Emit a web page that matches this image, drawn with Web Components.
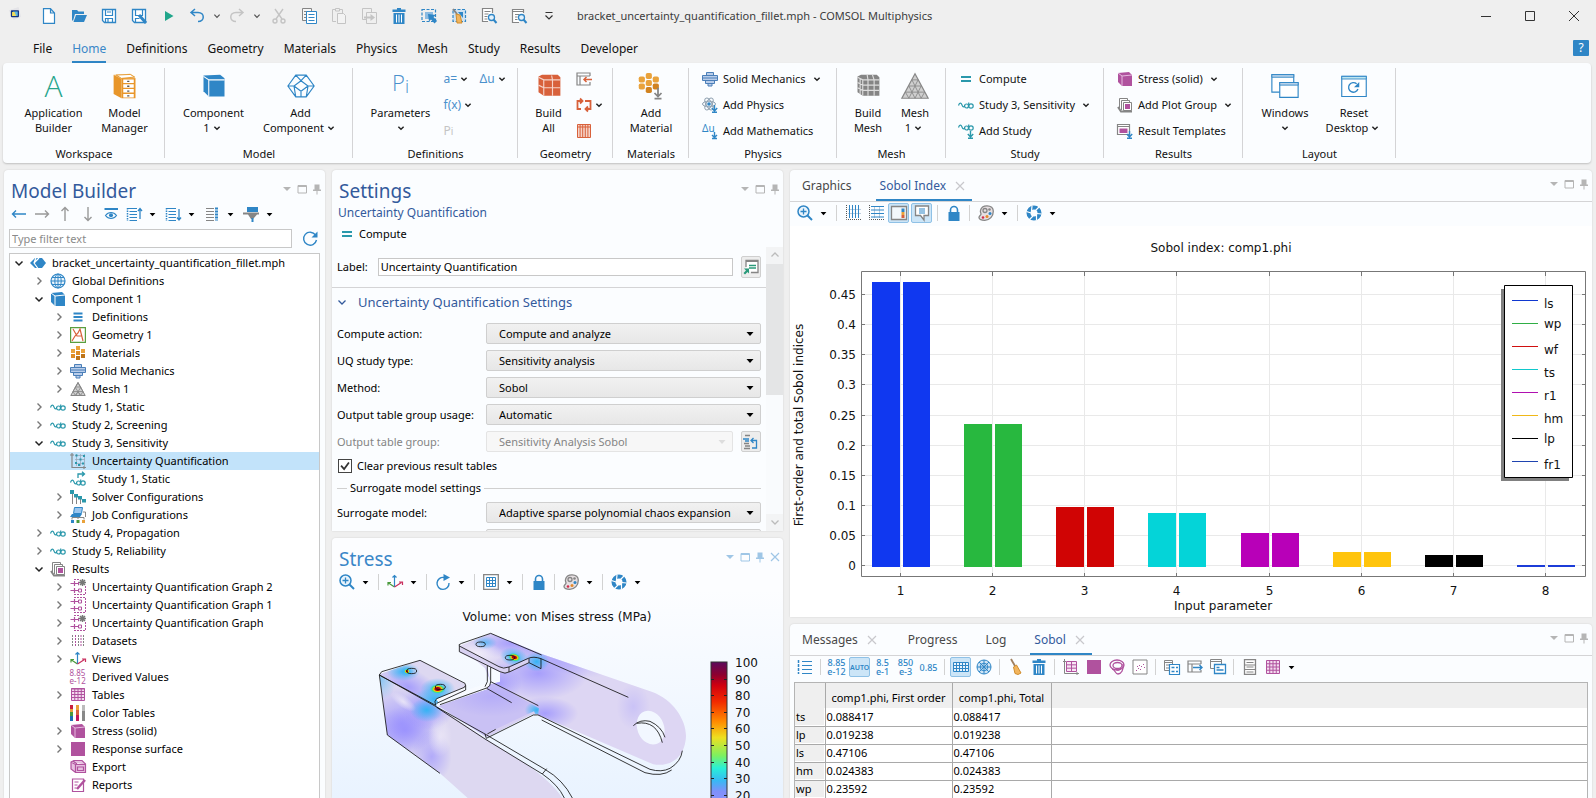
<!DOCTYPE html>
<html lang="en">
<head>
<meta charset="utf-8">
<title>bracket_uncertainty_quantification_fillet.mph - COMSOL Multiphysics</title>
<style>
html, body { margin: 0; height: 100%; }
body { background: #efefef; font: 11px/18px "Noto Sans", "Open Sans", sans-serif; color: #111; overflow: hidden; }
</style>
</head>
<body>
<comsol-app></comsol-app>
<script>
const B = '#2f86c6', T = '#2a98ab', G = '#858585', P = '#b0529e', O = '#d8613b', Y = '#e9a23b', K = '#c4c4c4';
const st = (c, w = 1) => `fill="none" stroke="${c}" stroke-width="${w}"`;
const cube = (c, l) => `<path fill="${c}" d="M1 2l11-1 3 3v11H5L1 11z"/><path ${st(l)} d="M1 2l4 3v10M5 5l10-1"/>`;
const wave = `<path ${st(T, 1.2)} d="M.5 8.500C1.500 5.500 3 5.500 4 8s2 2.500 3 .5"/><circle ${st(T, 1.2)} cx="8.500" cy="9" r="2"/><circle ${st(T, 1.2)} cx="13" cy="9" r="2.200"/><path ${st(T, 1.2)} d="M10.700 9V5.500"/>`;
const down = c => `<path ${st(c, 1.400)} d="M12.500 8v6M9.800 11l2.700 3 2.700-3M10 15.300h5"/>`;
const stack = `<path fill="#fff" stroke="${G}" d="M2.500 11V1.500h8V3M4.500 13V3.500h8V5"/><path fill="#fff" stroke="${G}" d="M6.500 5.500h8v8h-8z"/><path fill="${P}" d="M8 7h5v5H8z"/><path ${st(G, 2)} d="M1 10l3 4.500h11"/>`;
const solid = `<path fill="#b9cdea" stroke="#4b7fb8" d="M4.500 1.500h7v3h-7zM.5 4.500h15v5H.5zM3.500 9.500h9v3h-9zM6 12.500h4v2.500H6z"/><path stroke="#4b7fb8" d="M0 7h16"/>`;
const mats = `<g fill="${Y}"><path d="M6 1h4v4H6zM1 4h4v4H1zM11 4h4v4h-4z"/></g><g fill="#df8c24"><path d="M6 6h4v4H6zM1 9h4v4H1z"/></g><path fill="#bd7419" d="M6 11h4v4H6zM11 9h4v4h-4z"/>`;
const tri = `<path fill="#cfcfcf" stroke="${G}" d="M8 1.500L15.200 14.500H.8z"/><path ${st(G, .8)} d="M5.500 6h5M3 10.500h10M8 1.500l-5 9 2.500 4 5.500-8.500M8 1.500l5 9-2.500 4L5 6M8 10.500l-2.500 4M8 10.500l2.500 4"/>`;
const uq = s => `<path ${st(P)} stroke-dasharray="2 1" d="M4 .5h11.500v15H4"/><path ${st(P, 1.2)} d="M.5 4.500H8M4.500 2v5M.5 11.500H8M4.500 9v5"/><path fill="#fff" stroke="${P}" d="M8.500 3h3v3h-3zM8.500 10h3v3h-3z"/>` + (s ? `<path fill="#fff" d="M9 0h7v7H9z"/><path stroke="#777" stroke-width="1.500" d="M12.500 0v7M9 3.500h7M10 1l5 5M15 1l-5 5"/>` : '');
const trash = `<path fill="${B}" d="M6 0h4v1.500h4.500V4h-13V1.500H6zM2.500 5h11v11h-11z"/><path stroke="#fff" d="M5.500 6.500v8M8 6.500v8M10.500 6.500v8"/>`;
const palette = `<path fill="#e6dfe2" stroke="${G}" stroke-width="1.300" d="M9 .8c4 0 6.300 2 6.300 5.500 0 5-3.500 9-8.500 9C3.500 15.300 1 14.500 1 12.500s2-2 2-3.500-1-1.500-.5-3.500C3 3 5.500.8 9 .8z"/><circle cx="7" cy="5.500" r="2" ${st(G, 1.3)}/><circle cx="11.500" cy="4.500" r="1.300" fill="${G}"/><circle cx="12" cy="8.500" r="1.500" fill="${B}"/><circle cx="9" cy="11.500" r="1.500" fill="#e58a2c"/><circle cx="5" cy="12.500" r="1.300" fill="#d42a4a"/>`;
const camera = `<circle cx="8" cy="8" r="5.500" ${st(B, 4)}/><path stroke="#fff" stroke-width="1.200" d="M6 1l-.5 5M13 2L9.500 5.500M15.500 9L10.500 8.500M10.500 15l0-5M3.500 14.500L7 11M.5 6.500L5 8"/>`;
const magn = `<circle cx="10.500" cy="9.500" r="3" fill="#e3f1fb" stroke="${B}" stroke-width="1.300"/><path stroke="${B}" stroke-width="2" d="M12.500 11.500l3 3.500"/>`;
const gridBox = (c, f, x0, y0, x1, y1, n, m) => { let d = ''; for (let i = 0; i <= n; i++) d += `M${x0 + (x1 - x0) * i / n} ${y0}V${y1}`; for (let i = 0; i <= m; i++) d += `M${x0} ${y0 + (y1 - y0) * i / m}H${x1}`; return `<path fill="${f}" d="M${x0} ${y0}H${x1}V${y1}H${x0}z"/><path ${st(c)} d="${d}"/>`; };
const win = (x, y, w, h, c) => `<path fill="#fbfdff" stroke="${c}" d="M${x} ${y}h${w}v${h}h${-w}z"/><path stroke="${c}" d="M${x} ${y + 2}h${w}"/>`;
const ICONS = {
  logo: `<path fill="#e4e4e8" d="M1 4L13 0l3 12-9 4z"/><rect x="3.500" y="4" width="10" height="8.500" rx="1" fill="#12327f"/><rect x="6" y="5.500" width="6" height="5.500" fill="#5fb8e0"/><path fill="#f2dc5a" d="M5 6h3l2 5H5z"/>`,
  new: `<path fill="#fff" stroke="${B}" stroke-width="1.200" d="M2.500.6h7L13.500 5v10.400h-11zM9.500.6V5h4"/>`,
  open: `<path fill="${B}" d="M1 2h5l1.500 1.500H13V6H4L2 13l-1-1z"/><path fill="${B}" d="M5 7h11l-3 7H2.500z"/>`,
  save: `<path fill="#fff" stroke="${B}" stroke-width="1.300" d="M1.500 1.500h13v13h-11l-2-2z"/><path ${st(B, 1.2)} d="M4.500 1.500v6h7v-6M4.500 14.500v-4h7v4M6 4h4M7 11v3"/>`,
  saveas: `<path fill="#fff" stroke="${B}" stroke-width="1.300" d="M1.500 1.500h13v13h-11l-2-2z"/><path ${st(B, 1.2)} d="M4.500 1.500v6h7v-6M4.500 14.500v-4h4"/><path stroke="${B}" stroke-width="3" d="M8 7l7 8"/>`,
  run: `<path fill="#21a68b" d="M4 3l8.500 5L4 13z"/>`,
  undo: `<path ${st(B, 1.500)} d="M6 1L2 4.500 6 8M2.500 4.500H9c7 0 7 9 0 9"/>`,
  redo: `<path ${st(K, 1.500)} d="M10 1l4 3.500L10 8M13.500 4.500H7c-7 0-7 9 0 9"/>`,
  cut: `<path ${st(K, 1.400)} d="M4 1l7 10M12 1L5 11"/><circle ${st(K, 1.400)} cx="4" cy="13" r="2"/><circle ${st(K, 1.400)} cx="12" cy="13" r="2"/>`,
  copy: `<path fill="#f6f6f6" stroke="${G}" d="M1.500.5h9v12h-9zM3 3.500h3M3 6.500h2M3 9.500h2"/><path fill="#fff" stroke="${B}" d="M5.500 3.500h10v12h-10zM7.500 6.500h6M7.500 9.500h6M7.500 12.500h6"/>`,
  paste: `<path ${st(K)} d="M5 13.500H1.500v-12H4M9 1.500h2.500V5M4.500.5h4v2.500h-4z"/><path fill="#f3f3f3" stroke="${K}" d="M6.500 5.500h6l2 2v8h-8z"/>`,
  dup: `<path ${st(K)} d="M5 11.500H1.500v-11h9V4M5.500 4.500h10v11h-10z"/><path ${st(K, 2)} d="M3 9.500h7"/><path fill="${K}" d="M9.500 6l4.500 3.500-4.500 3.500z"/>`,
  trash,
  select: `<path ${st(B, 1.2)} stroke-dasharray="3 1.500" d="M1 1.500h13.500v12H1z"/><path fill="#8bbbe2" d="M4 4h8v7H4z"/><path fill="${B}" d="M7 6l8 1-2.500 2 3.500 4-2.500 2.500-3.500-4-2 2z"/>`,
  clear: `<path fill="#cfe2f2" stroke="${B}" stroke-width="1.200" stroke-dasharray="3 1.500" d="M2 1.500h12.500v12H2z"/><path fill="${B}" d="M7 4h5v6z"/><path stroke="${G}" stroke-width="2" d="M2 1l4 5"/><path fill="#f2b55e" stroke="#d08c2c" d="M5 6l4 1 2 8H6z"/>`,
  find: `<path fill="#fff" stroke="${G}" stroke-width="1.200" d="M11.500 5V.5h-10v13H7"/><path ${st(G)} d="M3.500 3.500h6M3.500 6h4M3.500 8.500h3M3.500 11h3"/>${magn}`,
  find2: `<path fill="#fff" stroke="${G}" stroke-width="1.200" d="M12.500 5V1.500h-11v13H8M1.500 3.500h11"/><path ${st(G)} d="M4 6.500h4M4 9h2.500M4 11.500h2.500"/>${magn}`,
  custom: `<path ${st('#333', 1.200)} d="M4.500 4.500h7M4.500 7.500L8 11l3.500-3.500"/>`,
  chev: `<path ${st('#222', 1.600)} d="M5 6.500l3 3 3-3"/>`,
  chevg: `<path ${st('#555', 1.400)} d="M5 6.500l3 3 3-3"/>`,
  topen: `<path ${st('#222', 1.500)} d="M4.500 6.500L8 10l3.500-3.500"/>`,
  tclosed: `<path ${st('#777', 1.400)} d="M6.500 4.500L10 8l-3.500 3.500"/>`,
  sect: `<path ${st('#335a9c', 1.300)} d="M4.500 6.500L8 10l3.500-3.500"/>`,
  sup: `<path ${st('#bbb', 1.300)} d="M4.500 9.500L8 6l3.500 3.500"/>`,
  sdown: `<path ${st('#bbb', 1.300)} d="M4.500 6.500L8 10l3.500-3.500"/>`,
  drop: `<path fill="#000" d="M4.500 6h7L8 10z"/>`,
  dropg: `<path fill="#ddd" d="M4.500 6h7L8 10z"/>`,
  hdrop: `<path fill="currentColor" d="M4 6h8l-4 4z"/>`,
  hmax: `<path fill="none" stroke="currentColor" d="M4 4.500h8.500v7.500H4z"/><path stroke="currentColor" d="M4 5.500h8"/>`,
  hpin: `<path fill="currentColor" d="M5.500 3.500h5v5H12v1.500H8.500v3.500h-1V10H4V8.500h1.500z"/>`,
  hx: `<path fill="none" stroke="currentColor" stroke-width="1.200" d="M4 4l8 8M12 4l-8 8"/>`,
  wmin: `<path stroke="#333" d="M3 8.500h10"/>`, wmax: `<path ${st('#333')} d="M3.500 3.500h9v9h-9z"/>`, wx: `<path ${st('#333')} d="M3 3l10 10M13 3L3 13"/>`,
  check: `<path ${st('#333', 2)} d="M3.500 7.500l3.500 4L12.500 4"/>`,
  compute: `<path stroke="${T}" stroke-width="2" d="M3 6h10M3 10h10"/>`,
  study: wave, solid, mats, tri, stack, palette, camera, cubeB: cube(B, '#fff'), cubeP: cube(P, '#e6b9df'),
  physics: `<g ${st('#8fa0b0')}><ellipse cx="7" cy="7" rx="6.500" ry="2.800"/><ellipse cx="7" cy="7" rx="6.500" ry="2.800" transform="rotate(60 7 7)"/><ellipse cx="7" cy="7" rx="6.500" ry="2.800" transform="rotate(120 7 7)"/></g><circle cx="7" cy="7" r="1.800" fill="${B}"/>${down(B)}`,
  math: `<text x="0" y="9" font-size="10" fill="${B}" font-family="Noto Sans, sans-serif">Δu</text><path ${st(B, 1.4)} d="M12.500 9v5M10 12l2.500 2.500L15 12M10 15.500h5"/>`,
  addstudy: `<g transform="translate(0 -4)">${wave}</g>${down(T)}`,
  template: `<path fill="#fff" stroke="${G}" stroke-width="1.200" d="M.5 1.500h12v10H.5zM.5 3.500h12"/><path fill="${P}" d="M2.500 5.500h8v4.500h-8z"/>${down(B)}`,
  gimport: `<path ${st(G, 1.200)} d="M14 5V2H1v12h13v-3M1 5h13M4 5v9"/><path ${st(O, 1.500)} d="M16 8.500H8M10.500 6L8 8.500l2.500 2.500"/>`,
  gloop: `<path ${st(O, 1.800)} d="M6 4H1.500v8H5M10 12h4.500V4H9M4 1.500L6.500 4 4 6.500M12 9.500L9.500 12l2.500 2.500"/>`,
  gclean: gridBox(O, '#f6d3c8', 1.5, 1.500, 14.500, 14.500, 5, 1) + `<path ${st(O)} d="M1.500 4h13"/>`,
  root: `<path fill="${B}" d="M0 8l5-5h7l4 5-4 5H5z"/><path ${st('#fff', 1.200)} d="M6 2.500L4 8l4 5.500M4 8L9 3"/>`,
  globe: `<circle cx="8" cy="8" r="7" fill="#eaf4fc" stroke="${B}" stroke-width="1.200"/><ellipse cx="8" cy="8" rx="3.200" ry="7" ${st(B)}/><path ${st(B)} d="M8 1v14M1 8h14M2 4.500h12M2 11.500h12"/>`,
  defs: `<path stroke="${B}" stroke-width="2" d="M3.500 4.500h9M3.500 8h9M3.500 11.500h9"/>`,
  geom: `<path fill="#fff" stroke="#5a9e3f" stroke-width="1.200" d="M.6.600h14.800v14.800H.6z"/><path ${st(O, 1.200)} d="M3 2l4 7h5M2 14l3-5 3-3 2-4 3 12"/>`,
  uqn: `<path ${st(G, 1.200)} d="M2 0v14.500h14M0 2h4M14 13v3"/><path ${st('#9ab', .8)} d="M5 2.500h10M5 6.500h10M5 10.500h10M6.500 1v12M10.500 1v12M14.500 1v12"/><path fill="${T}" d="M5.500 1.500h2v2h-2zM13 2h2v2h-2zM9.500 5.500h2v2h-2zM5 9h2v2H5zM12 9.500h2v2h-2zM8 11h2v2H8z"/>`,
  ref: `<g transform="translate(0 3)">${wave}</g><path ${st(T, 1.300)} d="M8 7V3h6M12 .8L14.500 3 12 5.200"/>`,
  solver: `<g stroke="${G}"><path d="M2.500 2v13M6.500 6v9M10.500 8v7"/></g><g fill="${T}"><path d="M0 1h4v4H0zM4 5h4v3.500H4zM8 7h4v3.500H8zM12 10h4v3.500h-4z"/></g>`,
  job: `<path fill="#9cc6ee" stroke="${B}" d="M4.500.5h8l-1 6h-8z"/><path fill="${B}" d="M2 7h10l-2 3H0z"/><path ${st(G)} d="M13 5h2.500v5M2 12.500v-2h12v2M8 10v2"/><path fill="${B}" d="M1 13h3v3H1z"/><path fill="#4a9a3c" d="M6.500 13h3v3h-3z"/><path fill="${Y}" d="M12 13h3v3h-3z"/>`,
  uqg: uq(1), uqg1: uq(0),
  datasets: `<path stroke="${G}" stroke-dasharray="2 1" d="M2.500 2v12M8.500 2v12M13.500 2v12"/><path stroke="${P}" stroke-dasharray="2 1" d="M5.500 2v12M11 2v12"/>`,
  views: `<path ${st('#4a9a3c', 1.200)} d="M7.500 13L1.500 9M1 11.500V8.500h3"/><path ${st(B, 1.200)} d="M7.500 13V1.500M5.500 3.500l2-2 2 2"/><path ${st('#c9305f', 1.200)} d="M7.500 13l7-4.500M12 8h3.500v3"/>`,
  tables: gridBox(P, '#f3dcef', 1.500, 1.500, 14.500, 13.500, 4, 4) + `<path stroke="${P}" d="M1 2h14"/>`,
  colors: `<path fill="#c9203f" d="M0 0h3v4H0z"/><path fill="${Y}" d="M0 4h3v3H0z"/><path fill="#4a9a3c" d="M0 7h3v4H0z"/><path fill="#1d6fb5" d="M0 11h3v5H0z"/><path fill="${Y}" d="M6 0h3v5H6z"/><path fill="${O}" d="M6 5h3v5H6z"/><path fill="#c2185b" d="M6 10h3v6H6z"/><path fill="#bbb" d="M12 0h3v6h-3z"/><path fill="#888" d="M12 6h3v10h-3z"/>`,
  square: `<path fill="${P}" d="M1 1h14v14H1z"/>`,
  export: `<path fill="#e7bfe0" stroke="${P}" stroke-width="1.200" d="M1 3l3-1.500h8L15.500 5v8.500h-10L1 10zM1 3l4.500 2.500H15M5.500 5.500v8"/><path ${st(P, 1.200)} d="M7.500 8h6v3.500h-6zM3 2l4 3"/>`,
  reports: `<path fill="#fff" stroke="${P}" stroke-width="1.200" d="M2.500 2h11v12.500h-11z"/><path ${st(P)} d="M4.500 5h4M4.500 8h3M4.500 11h2"/><path stroke="${P}" stroke-width="2.500" d="M7 12l8-9"/>`,
  left: `<path ${st(B, 1.400)} d="M15 8H1.500M5 4.500L1.500 8 5 11.500"/>`, right: `<path ${st('#999', 1.400)} d="M1 8h13.500M11 4.500L14.500 8 11 11.500"/>`,
  up: `<path ${st('#999', 1.400)} d="M8 15V1.500M4.500 5L8 1.500 11.500 5"/>`, dn: `<path ${st('#999', 1.400)} d="M8 1v13.500M4.500 11L8 14.500l3.500-3.500"/>`,
  show: `<path stroke="${B}" stroke-width="2" d="M1.500 3H15"/><path ${st(B, 1.200)} d="M2.500 9.500c3-4 8-4 11 0-3 4-8 4-11 0z"/><circle cx="8" cy="9.300" r="2" fill="${B}"/>`,
  coll: `<path stroke="${B}" stroke-width="1.500" stroke-dasharray="1.500 1" d="M1.500 2v13"/><path stroke="${B}" d="M1 2.500h10M3.500 5.500H11M3.500 8.500H11M3.500 11.500H11M3.500 14.500H11"/><path ${st(B, 1.300)} d="M14 13V2.500M12 5l2-2.500L16 5"/>`,
  expa: `<path stroke="${B}" stroke-width="1.500" stroke-dasharray="1.500 1" d="M1.500 2v13"/><path stroke="${B}" d="M1 2.500h10M3.500 5.500H11M3.500 8.500H11M3.500 11.500H11M3.500 14.500H11"/><path ${st(B, 1.300)} d="M14 3v11M12 11.500l2 2.500 2-2.500"/>`,
  cols: `<path stroke="${G}" stroke-width="1.200" d="M2 2.500h8M2 5.500h8M2 8.500h8M2 11.500h8M2 14.500h8"/><path stroke="${B}" stroke-width="3" stroke-dasharray="2 1" d="M12.500 1.500v13"/>`,
  filter: `<path fill="${B}" d="M4 1h11v5H4z"/><path fill="${G}" d="M0 6.500h16v2h-2L10 13H8L5 8.500H0z"/><path fill="${B}" d="M8.500 12h2v4h-2z"/>`,
  refresh: `<path ${st(B, 1.400)} d="M13.500 4A6.500 6.500 0 1 0 14.500 9"/><path fill="${B}" d="M15.500.5v6h-6z"/>`,
  rotate: `<path ${st(B, 1.400)} d="M9 3.500A6 6 0 1 0 14 9"/><path fill="${B}" d="M8.500 0L15 3.500 8.500 7z"/>`,
  labelb: `<path fill="#fff" stroke="${G}" stroke-width="1.300" d="M3 8V1.500h12v12H8"/><path stroke="${G}" stroke-width="2" d="M3 2h12"/><path stroke="#2a9a7a" stroke-width="1.300" d="M6 6.500h7M6 9h7"/><path fill="#2a9a7a" d="M1 9.500h5v5L4.500 13 2 15.500.5 14 3 11.500z"/>`,
  goto: `<path stroke="${G}" stroke-width="1.300" d="M3 1.500h5M2 9.500h5M3 12h5M2 14.500h6"/><path stroke="${B}" stroke-width="1.500" d="M1 5h6M3 7h4"/><path ${st(B, 1.300)} d="M9 6.500h5.500v7.500H10M11.500 4L9 6.500 11.500 9"/>`,
  zoom: `<circle cx="6.500" cy="6.500" r="5.500" fill="#eaf4fc" stroke="${B}" stroke-width="1.500"/><path stroke="${B}" stroke-width="1.300" d="M3.500 6.500h6M6.500 3.500v6"/><path stroke="${B}" stroke-width="2" d="M10.500 10.500l4.500 4.500"/>`,
  gridb: `<path fill="#fff" stroke="${G}" stroke-width="1.300" d="M.7.700h14.600v14.600H.7z"/>${gridBox(B, '#fff', 3.5, 3.5, 12.5, 12.5, 3, 3)}`,
  lock: `<path fill="${B}" d="M2.500 7h11v9h-11z"/><path ${st(B, 1.600)} d="M4.500 8V5a3.500 3.500 0 0 1 7 0v3"/>`,
  gv: `<path ${st('#555')} stroke-dasharray="1 1" d="M1.500 0v14.500H16"/><path stroke="#bcd" d="M3 4.500h13M3 8.500h13"/><path stroke="${B}" d="M4.500 0v13M7.500 0v13M10.500 0v13M13.500 0v13"/>`,
  gh: `<path ${st('#555')} stroke-dasharray="1 1" d="M1.500 0v14.500H16"/><path stroke="#bcd" d="M6.500 1v12M11.500 1v12"/><path stroke="${B}" d="M3 1.500h13M3 5h13M3 8.500h13M3 12h13"/>`,
  legend: `<path fill="#f2f7fb" stroke="${G}" stroke-width="1.300" d="M.5 1.500h15v13H.5z"/><path fill="${B}" d="M10.500 3.500h3V7h-3z"/><path fill="${Y}" d="M10.500 7h3v3h-3z"/><path fill="${O}" d="M10.500 10h3v3h-3z"/>`,
  note: `<path fill="#fff" stroke="${G}" stroke-width="1.300" d="M1.500 1h13v9.500h-4.500V15L6.500 10.500h-5z"/><path stroke="${B}" stroke-width="1.200" d="M5 4h6M5 6h6M5 8h6"/>`,
  nlist: `<path stroke="${B}" stroke-width="1.200" d="M5 2.500h10M5 6.500h10M5 10.500h10M5 14.500h10"/><path stroke="${B}" stroke-width="1.500" stroke-dasharray="3 1" d="M1.500 1v14"/>`,
  tbl: gridBox(B, '#eaf4fc', .5, 3.500, 15.500, 12.500, 5, 3),
  polar: `<circle cx="8" cy="8" r="7" fill="#cfe4f5" stroke="${B}"/><circle cx="8" cy="8" r="3.800" ${st(B)}/><path stroke="${B}" d="M8 1v14M1 8h14M3 3l10 10M13 3L3 13"/>`,
  broom: `<path stroke="#a08060" stroke-width="1.800" d="M3 0l4 7"/><path fill="#f2b55e" stroke="#d08c2c" d="M5.500 8l3-2 4.500 8-3 1.500-3-1z"/>`,
  ptable: `<path ${st(G)} d="M1.500 0v14.500H16M0 2.500h3M14 13v3"/>${gridBox(P, '#f7e6f4', 3.500, 2.500, 13.500, 12.500, 2, 3)}`,
  contour: `<ellipse cx="8" cy="6" rx="7" ry="5" ${st(P, 1.300)}/><ellipse cx="8.500" cy="6.500" rx="4.500" ry="3" ${st(P, 1.300)}/><path ${st(P, 1.300)} d="M3 10c3 0 3 5 6 5s6-4 5-10M7 10c2 2 4 1 5-1"/>`,
  scatter: `<path fill="#fff" stroke="${G}" d="M1 1h14v14H1z"/><g fill="${P}"><path d="M4 11h1v1H4zM6 9h1v1H6zM8 10h1v1H8zM9 7h1v1H9zM11 5h1v1h-1zM7 6h1v1H7zM12 8h1v1h-1zM5 7h1v1H5z"/></g>`,
  cpt: `${win(.5, 1.500, 8, 10, G)}<path stroke="${G}" d="M2 6h3M2 9h3"/><path fill="#fff" stroke="${B}" stroke-width="1.200" d="M5.500 5.500h10v10h-10z"/><path stroke="${B}" stroke-width="1.600" d="M7.500 8.500h3M12 8.500h2M7.500 12.500h3M12 12.500h2"/>`,
  expt: `<path ${st(G, 1.200)} d="M14 5V2H1v11h13v-2M1 5h13M5 5v8"/><path ${st(B, 1.400)} d="M6 8.500h9M12.500 6L15 8.500 12.500 11"/>`,
  wins: win(.5, .5, 11, 9, G) + `<path fill="#fff" stroke="${B}" stroke-width="1.300" d="M4.500 5.500h11v9h-11z"/><path stroke="${B}" stroke-width="1.300" d="M6.500 8.500h3M6.500 11h7"/>`,
  form: `<path fill="#fff" stroke="${G}" stroke-width="1.300" d="M2.500.7h11v14.600h-11z"/><path ${st(G, 1.200)} d="M4.500 3.500h7M2.500 6h11M4.500 8h7M2.500 10.500h11M4.500 13h7"/>`,
  ptab: gridBox(P, '#f3dcef', 1.500, 1.500, 14.500, 14.500, 4, 4),
  manager: ['0 0 32 32', `<path fill="#f1c27c" d="M3 3l19-1 6 4-17 2z"/><path fill="#fff" stroke="#e39527" d="M6 3.500l16-.7 5 3-15 1.500z"/><path fill="#e8962a" d="M3 3l9 5v22l-9-5z"/><path fill="#e8962a" d="M12 7h16v23H12z"/><path fill="#fff" d="M14 8.500h12v4H14zM14 14h12v4H14zM14 19.500h12v4H14zM14 25h12v4H14z"/><path fill="#555" d="M18.500 10h2.500v1.500h-2.500zM18.500 15.500h2.500V17h-2.500zM18.500 21h2.500v1.500h-2.500zM18.500 26.500h2.500V28h-2.500z"/>`],
  bigcube: ['0 0 32 32', `<path fill="${B}" d="M4 4l19-1 5 4v21H10l-6-6z"/><path ${st('#fff', 1.200)} d="M4 5l6 4v19M10 9h18"/>`],
  wire: ['0 0 32 32', `<path ${st(B, 1.300)} d="M1 16L10 3.500h12L31 16l-9 12.500H10zM10 3.500L16 10l6-6.500M10 28.500L8 16l8-6 8 6-2 12.500M8 16H1M24 16h7M8 16l8 6 8-6M16 22v6"/>`],
  red: ['0 0 32 32', `<path fill="${O}" d="M4 5l4-2h18l3 3v21H10l-6-4z"/><path ${st('#f6d3c8', 1.300)} d="M4 6l6 3h19M10 9v18M19 4l1 5v18M4 15l6 3h19"/>`],
  gray: ['0 0 32 32', `<path fill="#858585" d="M4 5l4-2h18l3 3v21H10l-6-4z"/><path ${st('#ddd', 1.300)} d="M4 6l6 3h19M10 9v18M16 9v18M23 9v18M15 3l1 6M21 3l2 6M4 12l6 3h19M4 18l6 3h19M7 8v17"/>`],
  mesh: ['0 0 32 32', `<path fill="#cfcfcf" stroke="#888" stroke-width="1.400" d="M16 2l15 28H1z"/><path ${st('#888', 1)} d="M12.500 9h7M9 16h14M5 23h22M12.500 9L23 30M9 16l7 14M5 23l4 7M19.500 9L9 30M23 16l-7 14M27 23l-4 7"/>`],
  addmat: ['0 0 32 32', `<g fill="${Y}"><rect x="10" y="1" width="7" height="7" rx="2"/><rect x="2" y="5" width="7" height="7" rx="2"/><rect x="18" y="5" width="7" height="7" rx="2"/><rect x="10" y="9" width="7" height="7" rx="2"/><rect x="2" y="13" width="7" height="7" rx="2"/></g><g fill="#d1821f"><rect x="10" y="17" width="7" height="7" rx="2"/><rect x="18" y="13" width="7" height="7" rx="2"/></g><path ${st(G, 2)} d="M24 18v10M20 24l4 4 4-4M20 30.500h8"/>`],
  windows: ['0 0 32 32', `<path fill="#fff" stroke="${B}" stroke-width="1.300" d="M1 3h25v20H1z"/><path fill="#b9d3ea" stroke="${B}" d="M1 3h25v3H1z"/><path fill="#fff" stroke="${B}" stroke-width="1.300" d="M10 12h21v17H10z"/><path fill="#b9d3ea" stroke="${B}" d="M10 12h21v3H10z"/>`],
  reset: ['0 0 32 32', `<path fill="#fff" stroke="${B}" stroke-width="1.300" d="M2 5h28v23H2z"/><path fill="#bfe6f0" stroke="${B}" d="M2 5h28v3H2z"/><path ${st(B, 1.600)} d="M19 13.500a5.500 5.500 0 1 0 1.500 6"/><path fill="${B}" d="M22 11.500v6h-6z"/>`]
};

const sheet = `*{box-sizing:border-box} button{font:inherit;color:inherit;background:none;border:0;margin:0;padding:0;cursor:default} [hidden]{display:none}`;
function define(name, css, html, init) {
  const tpl = document.createElement('template');
  customElements.define(name, class extends HTMLElement {
    connectedCallback() {
      if (this.shadowRoot) return;
      const root = this.attachShadow({ mode: 'open' });
      tpl.innerHTML = `<style>${sheet}${css}</style>${typeof html === 'function' ? html(this) : html}`;
      root.append(tpl.content.cloneNode(true));
      if (init) init(this, root);
    }
  });
}
const at = (e, n, d = '') => e.getAttribute(n) ?? d;
const ic = (n, s = 16) => `<ui-icon name="${n}" size="${s}"></ui-icon>`;

define('ui-icon', `:host{display:inline-flex;flex:none} svg{display:block;overflow:visible}
 .num{width:17px;font-size:8px;line-height:8px;color:${P}} .num b{display:block;font-weight:400}`, e => {
  if (at(e, 'name') === 'derived') return '<span class="num"><b>8.85</b><b>e-12</b></span>';
  const d = ICONS[at(e, 'name')], s = at(e, 'size', '16');
  const [vb, body] = Array.isArray(d) ? d : ['0 0 16 16', d];
  return `<svg width="${s}" height="${s}" viewBox="${vb}" aria-hidden="true">${body}</svg>`;
});

/* Toolbar: items is a list of icon names; "|" separator, "v" drop arrow, "*" prefix pressed, "#a,b" text glyph */
define('tool-strip', `:host{display:flex;align-items:center;height:20px}
 button{width:23px;height:20px;display:grid;place-items:center;align-content:center;color:${B};font-size:9px;line-height:9px;font-weight:500;flex:none;border:1px solid transparent;border-radius:2px}
 button.on{background:#cce5f7;border-color:#8fc1e6;width:21px;margin:0 1px} button.v{width:16px;justify-items:start}
 i{width:9px;height:16px;flex:none;display:flex;justify-content:center} i::before{content:"";width:1px;background:#d2d2d2} b{font-weight:inherit;display:block} .auto b{font-size:7px;font-weight:600}`,
  e => at(e, 'items').split(' ').map(t => {
    if (t === '|') return '<i></i>';
    if (t === 'v') return `<button class="v" aria-label="More">${ic('drop', 13)}</button>`;
    const on = t[0] === '*' ? 'on' : ''; if (on) t = t.slice(1);
    if (t[0] === '#') return `<button class="${on} ${t === '#AUTO' ? 'auto' : ''}">${t.slice(1).split(',').map(x => `<b>${x}</b>`).join('')}</button>`;
    return `<button class="${on}" aria-label="${t}">${ic(t)}</button>`;
  }).join(''));

define('title-bar', `:host{display:flex;align-items:center;height:32px;padding-left:5px} .logo{width:29px;padding-left:3px}
 button{width:30px;height:30px;display:grid;place-items:center;flex:none} .s{width:26px} .c{width:14px} h1{font:inherit;margin:0 0 0 13px;flex:1;white-space:nowrap;color:#3c3c3c} .w{width:44px}`,
  () => { const b = (n, c = '', s = 16) => `<button class="${c}" aria-label="${n}">${ic(n, s)}</button>`;
    return `<span class="logo">${ic('logo', 13)}</span>` + ['new', 'open', 'save', 'saveas', 'run'].map(n => b(n)).join('') + b('undo', 's') + b('chevg', 'c', 14) + b('redo', 's') + b('chevg', 'c', 14) +
      ['cut', 'copy', 'paste', 'dup', 'trash', 'select', 'clear', 'find', 'find2', 'custom'].map(n => b(n)).join('') + `<h1>bracket_uncertainty_quantification_fillet.mph - COMSOL Multiphysics</h1>` + b('wmin', 'w') + b('wmax', 'w') + b('wx', 'w'); });

define('menu-tabs', `:host{display:flex;align-items:flex-start;gap:20px;height:31px;padding:0 7px 0 33px;font-size:12px;line-height:18px}
 button{height:31px;border-bottom:2px solid transparent;padding:4px 0 0} button:first-child{margin-right:7px} .on{color:#3a87c8;border-color:${B}}
 button.help{margin:8px 0 0 auto;width:16px;height:16px;background:${B};color:#fff;line-height:16px;border:0;border-radius:1px;padding:0}`,
  ['File', 'Home', 'Definitions', 'Geometry', 'Materials', 'Physics', 'Mesh', 'Study', 'Results', 'Developer'].map(t => `<button class="${t === 'Home' ? 'on' : ''}">${t}</button>`).join('') + `<button class="help">?</button>`);

define('ribbon-group', `:host{display:flex;flex-direction:column;flex:none;height:95px;background:linear-gradient(#d4d4d6,#d4d4d6) right top/1px 90px no-repeat}
 .c{height:77px;display:flex;justify-content:center} .l{text-align:center;line-height:18px;height:18px}`,
  e => `<div class="c" style="${at(e, 'pad')}"><slot></slot></div><div class="l">${at(e, 'label')}</div>`, e => { e.style.width = at(e, 'w') + 'px'; });
define('ribbon-big', `:host{display:block;flex:none} button{width:100%;display:flex;flex-direction:column;align-items:center;line-height:15px;padding-top:3px} 
 .i{height:30px;margin-bottom:4px;display:grid;place-items:center} span{display:flex;align-items:center;white-space:nowrap;height:15px} .i span{height:30px;align-items:flex-start} .A{font:300 30px/30px "Open Sans","Noto Sans",sans-serif;color:#27a58c} .P{font:300 22px/22px "Open Sans","Noto Sans",sans-serif;color:#4a90cc} .P small{font-size:18px;line-height:30px}`,
  e => { const i = at(e, 'icon'), art = i === 'A' ? '<span class="A">A</span>' : i === 'P' ? '<span class="P">P<small>i</small></span>' : ic(i, 28);
    return `<button><div class="i">${art}</div><span>${at(e, 'a')}</span><span>${at(e, 'b')}${e.hasAttribute('drop') ? ic('chev', 14) : ''}</span></button>`; }, e => { e.style.width = at(e, 'w') + 'px'; });
define('ribbon-list', `:host{display:grid;grid-template-rows:repeat(3,26px);align-content:start;margin-top:-2px;flex:none}`, '<slot></slot>');
define('ribbon-item', `:host{display:flex} button{display:flex;align-items:center;white-space:nowrap} .t{margin:0 4px 0 5px} .t:empty{display:none} .g{font-size:12px;color:#4a90cc}`,
  e => `<button>${at(e, 'glyph') ? `<span class="g" style="color:${at(e, 'color', '#4a90cc')}">${at(e, 'glyph')}</span>` : ic(at(e, 'icon'))}<span class="t">${at(e, 'text')}</span>${e.hasAttribute('drop') ? ic('chev', 14) : ''}</button>`);

const big = (icon, a, b, w, drop = '') => `<ribbon-big icon="${icon}" a="${a}" b="${b}" w="${w}" ${drop}></ribbon-big>`;
const item = (icon, text, drop = '') => `<ribbon-item icon="${icon}" text="${text}" ${drop}></ribbon-item>`;
define('ribbon-bar', `:host{display:flex;align-items:flex-start;height:100px;margin:0 5px 0 3px;padding-top:5px;background:#fbfdff;border-radius:4px;box-shadow:0 1px 2px #0003} ribbon-list.two{grid-template-columns:36px 34px;grid-auto-flow:row}`,
  `<ribbon-group w="162" label="Workspace" pad="padding-left:10px">${big('A', 'Application', 'Builder', 71)}${big('manager', 'Model', 'Manager', 71)}</ribbon-group>
 <ribbon-group w="188" label="Model" pad="padding-right:4px">${big('bigcube', 'Component', '1', 87, 'drop')}${big('wire', 'Add', 'Component', 87, 'drop')}</ribbon-group>
 <ribbon-group w="165" label="Definitions">${big('P', 'Parameters', '', 86, 'drop')}<ribbon-list class="two"><ribbon-item glyph="a=" drop></ribbon-item><ribbon-item glyph="Δu" drop></ribbon-item><ribbon-item glyph="f(x)" drop></ribbon-item><span></span><ribbon-item glyph="P&lt;small&gt;i&lt;/small&gt;" color="#c4c4c4"></ribbon-item></ribbon-list></ribbon-group>
 <ribbon-group w="95" label="Geometry" pad="padding-right:4px">${big('red', 'Build', 'All', 54)}<ribbon-list>${item('gimport', '')}${item('gloop', '', 'drop')}${item('gclean', '')}</ribbon-list></ribbon-group>
 <ribbon-group w="76" label="Materials">${big('addmat', 'Add', 'Material', 70)}</ribbon-group>
 <ribbon-group w="148" label="Physics" pad="justify-content:flex-start;padding-left:13px"><ribbon-list>${item('solid', 'Solid Mechanics', 'drop')}${item('physics', 'Add Physics')}${item('math', 'Add Mathematics')}</ribbon-list></ribbon-group>
 <ribbon-group w="109" label="Mesh">${big('gray', 'Build', 'Mesh', 47)}${big('mesh', 'Mesh', '1', 47, 'drop')}</ribbon-group>
 <ribbon-group w="158" label="Study" pad="justify-content:flex-start;padding-left:12px"><ribbon-list>${item('compute', 'Compute')}${item('study', 'Study 3, Sensitivity', 'drop')}${item('addstudy', 'Add Study')}</ribbon-list></ribbon-group>
 <ribbon-group w="139" label="Results" pad="justify-content:flex-start;padding-left:13px"><ribbon-list>${item('cubeP', 'Stress (solid)', 'drop')}${item('stack', 'Add Plot Group', 'drop')}${item('template', 'Result Templates')}</ribbon-list></ribbon-group>
 <ribbon-group w="153" label="Layout">${big('windows', 'Windows', '', 69, 'drop')}${big('reset', 'Reset', 'Desktop', 69, 'drop')}</ribbon-group>`);

define('dock-panel', `:host{display:flex;flex-direction:column;min-width:0;min-height:0;overflow:hidden;background:#fbfdff;border-radius:4px 4px 0 0;box-shadow:0 0 2px #0002}
 header{display:flex;align-items:center;height:34px;padding:8px 0 0 7px;flex:none} h2{font:19px/26px "Noto Sans",sans-serif;color:#335a9c;margin:0;flex:1} .b{display:flex;color:#b5b5b5;margin:-5px 1px 0 0} .b button{width:15px;height:16px}
 :host([tone=live]){background:linear-gradient(#fcfdff 20%,#e9f3ff)} :host([tone=live]) h2{color:#3a87c8} :host([tone=live]) .b{color:#9fc6e6}`,
  e => `${e.hasAttribute('heading') ? `<header><h2>${at(e, 'heading')}</h2><div class="b">${['hdrop', 'hmax', 'hpin'].concat(e.hasAttribute('closable') ? ['hx'] : []).map(n => `<button aria-label="${n.slice(1)}">${ic(n)}</button>`).join('')}</div></header>` : ''}<slot></slot>`);

define('tab-row', `:host{display:flex;height:32px;border-bottom:1px solid #d4d4d6;padding-left:8px;font-size:12px;flex:none}
 .t{display:flex;align-items:center;padding:2px 4px 0;height:31px;border-bottom:2px solid transparent;color:#484848;margin-right:20px} .on{color:#335a9c;border-color:${B}}
 .x{color:#c8c8cc;margin-left:6px;display:grid} .b{display:flex;color:#b5b5b5;margin-left:auto;align-items:center;padding:0 1px 3px 0} .b button{width:15px;height:16px}`,
  e => at(e, 'tabs').split(',').map(t => { const on = t[0] === '*', x = t.endsWith('!'); t = t.replace(/[*!]/g, ''); return `<div class="t ${on ? 'on' : ''}"><button>${t}</button>${x ? `<button class="x" aria-label="Close">${ic('hx')}</button>` : ''}</div>`; }).join('') +
    `<div class="b">${['hdrop', 'hmax', 'hpin'].map(n => `<button aria-label="${n.slice(1)}">${ic(n)}</button>`).join('')}</div>`);

define('tree-row', `:host{display:flex;align-items:center;height:18px;white-space:nowrap;color:#000} :host([selected]){background:#c2e3fa} .k{width:18px;display:grid;place-items:center} .i{width:20px;display:grid;place-items:center;margin-right:4px}`,
  e => `<button class="k" aria-label="Toggle">${at(e, 'fold') ? ic('t' + at(e, 'fold')) : ''}</button><span class="i">${ic(at(e, 'icon'))}</span><slot></slot>`, e => { e.style.paddingLeft = at(e, 'level') * 20 + 'px'; });

const TREE = [[0, 'root', 'open', 'bracket_uncertainty_quantification_fillet.mph'], [1, 'globe', 'closed', 'Global Definitions'], [1, 'cubeB', 'open', 'Component 1'], [2, 'defs', 'closed', 'Definitions'], [2, 'geom', 'closed', 'Geometry 1'], [2, 'mats', 'closed', 'Materials'], [2, 'solid', 'closed', 'Solid Mechanics'], [2, 'tri', 'closed', 'Mesh 1'],
  [1, 'study', 'closed', 'Study 1, Static'], [1, 'study', 'closed', 'Study 2, Screening'], [1, 'study', 'open', 'Study 3, Sensitivity'], [2, 'uqn', '', 'Uncertainty Quantification'], [2, 'ref', '', '&nbsp; Study 1, Static'], [2, 'solver', 'closed', 'Solver Configurations'], [2, 'job', 'closed', 'Job Configurations'],
  [1, 'study', 'closed', 'Study 4, Propagation'], [1, 'study', 'closed', 'Study 5, Reliability'], [1, 'stack', 'open', 'Results'], [2, 'uqg', 'closed', 'Uncertainty Quantification Graph 2'], [2, 'uqg1', 'closed', 'Uncertainty Quantification Graph 1'], [2, 'uqg', 'closed', 'Uncertainty Quantification Graph'], [2, 'datasets', 'closed', 'Datasets'],
  [2, 'views', 'closed', 'Views'], [2, 'derived', '', 'Derived Values'], [2, 'tables', 'closed', 'Tables'], [2, 'colors', '', 'Color Tables'], [2, 'cubeP', 'closed', 'Stress (solid)'], [2, 'square', 'closed', 'Response surface'], [2, 'export', '', 'Export'], [2, 'reports', '', 'Reports']];
define('model-tree', `:host{display:flex;flex-direction:column;flex:1;min-height:0} tool-strip{padding-left:3px} .f{display:flex;align-items:center;gap:10px;padding:5px 7px 5px 5px} .f button{display:grid}
 input{flex:1;min-width:0;height:19px;border:1px solid #c8c8c8;background:#fff;font:inherit;padding:0 2px;outline:0} input::placeholder{color:#8a8a8a} .tree{flex:1;min-height:0;overflow:hidden;margin:0 5px;border:1px solid #c8c8c8;border-bottom:0;background:#fff}`,
  `<tool-strip items="left right up dn show coll v expa v cols v filter v"></tool-strip><div class="f"><input aria-label="Filter" placeholder="Type filter text"><button aria-label="Refresh">${ic('refresh')}</button></div>
 <div class="tree">${TREE.map(([l, i, f, t]) => `<tree-row level="${l}" icon="${i}" fold="${f}" ${i === 'uqn' ? 'selected' : ''}>${t}</tree-row>`).join('')}</div>`);

define('form-row', `:host{display:grid;grid-template-columns:149px 1fr auto;align-items:center;height:27px;padding:0 5px} .s{display:grid;align-items:center;margin-left:0} .s>*{grid-area:1/1} ui-icon{justify-self:end;margin-right:3px;pointer-events:none}
 select{appearance:none;width:100%;height:21px;border:1px solid #cfcfcf;border-radius:2px;background:linear-gradient(#f1f1f1,#e7e7e7);font:inherit;color:#000;padding:0 12px;outline:0} select:disabled{opacity:1;background:#f7f7f7;border-color:#e4e4e4;color:#848484} :host([off]) label{color:#848484}
 .g{width:20px;height:21px;margin-left:8px;border:1px solid #cfcfcf;border-radius:2px;background:#ededed;display:grid;place-items:center}`,
  e => { const off = e.hasAttribute('off'); return `<label for="s">${at(e, 'label')}</label><div class="s"><select id="s" ${off ? 'disabled' : ''}><option>${at(e, 'value')}</option></select>${ic(off ? 'dropg' : 'drop')}</div>${off ? `<button class="g" aria-label="Go to source">${ic('goto')}</button>` : ''}`; });

define('settings-form', `:host{display:flex;flex-direction:column;flex:1;min-height:0;color:#000} .sub{font-size:12px;line-height:18px;color:#335a9c;padding-left:6px} .cmp{display:flex;align-items:center;height:20px;padding-left:7px;gap:4px;margin:2px 0 3px}
 .body{display:flex;flex:1;min-height:0} .form{flex:1;min-width:0;overflow:hidden} .lab{display:flex;align-items:center;height:41px;padding:0 5px 0 5px;border-bottom:1px solid #d4d4d6} .lab input{flex:1;height:18px;margin:0 8px 0 10px;border:1px solid #c8c8c8;font:inherit;padding:0 2px;outline:0;min-width:0}
 .lab button{width:20px;height:22px;border:1px solid #cfcfcf;border-radius:2px;background:#ededed;display:grid;place-items:center} h3{font:13px/28px "Noto Sans",sans-serif;color:#335a9c;margin:0 0 4px;display:flex;align-items:center;gap:8px;padding-left:2px}
 .chk{display:grid;grid-template-columns:14px auto;gap:5px;align-items:center;justify-content:start;height:22px;padding-left:6px} .chk input{appearance:none;margin:0;width:14px;height:14px;border:1px solid #444;background:#fff;grid-area:1/1} .chk ui-icon{grid-area:1/1;pointer-events:none}
 .leg{display:flex;align-items:center;height:22px;gap:3px;padding:0 5px} .leg::before{content:"";width:10px;height:1px;background:#d0d0d0} .leg::after{content:"";flex:1;height:1px;background:#d0d0d0}
 .sb{width:17px;display:flex;flex-direction:column;align-items:center;background:#f9fbfd;flex:none} .sb i{width:17px;height:131px;background:#e4e5e6} .sb button{width:17px;height:17px;background:#f3f4f5} .sb button:last-child{margin-top:auto}`,
  `<div class="sub">Uncertainty Quantification</div><div class="cmp">${ic('compute')}<span>Compute</span></div>
 <div class="body"><div class="form"><div class="lab"><label for="l">Label:</label><input id="l" value="Uncertainty Quantification"><button aria-label="Rename">${ic('labelb')}</button></div>
 <h3>${ic('sect')}<span>Uncertainty Quantification Settings</span></h3>
 <form-row label="Compute action:" value="Compute and analyze"></form-row><form-row label="UQ study type:" value="Sensitivity analysis"></form-row><form-row label="Method:" value="Sobol"></form-row><form-row label="Output table group usage:" value="Automatic"></form-row><form-row label="Output table group:" value="Sensitivity Analysis Sobol" off></form-row>
 <label class="chk"><input type="checkbox" checked>${ic('check', 14)}<span>Clear previous result tables</span></label><div class="leg">Surrogate model settings</div>
 <form-row label="Surrogate model:" value="Adaptive sparse polynomial chaos expansion"></form-row><form-row label="" value=""></form-row></div>
 <div class="sb"><button aria-label="Scroll up">${ic('sup')}</button><i></i><button aria-label="Scroll down">${ic('sdown')}</button></div></div>`);

define('stress-view', `:host{display:block;min-height:0} tool-strip{padding-left:3px} svg{display:block;width:100%;font:12px "DejaVu Sans",sans-serif;fill:#111}`, () => {
  const blob = (id, c, o = 1) => `<radialGradient id="${id}"><stop offset="0" stop-color="${c}" stop-opacity="${o}"/><stop offset="1" stop-color="${c}" stop-opacity="0"/></radialGradient>`;
  const hot = (x, y, rx, ry, a = 0) => `<g transform="translate(${x} ${y}) rotate(${a})"><ellipse rx="${rx * 2.200}" ry="${ry * 2.200}" fill="url(#cy)"/><ellipse rx="${rx}" ry="${ry}" fill="url(#hot)"/></g>`;
  return `<tool-strip items="zoom v | views v | rotate v | gridb v | lock | palette v | camera v"></tool-strip>
 <svg viewBox="332 592 451 206" role="img" aria-label="von Mises stress plot"><defs>${blob('pu', '#958cff', .75)}${blob('cy', '#35b4f4')}${blob('wh', '#f0ecf8')}
 <radialGradient id="hot"><stop offset=".3" stop-color="#b00010"/><stop offset=".5" stop-color="#f5c800"/><stop offset=".7" stop-color="#3fe08a"/><stop offset="1" stop-color="#35c8f4" stop-opacity="0"/></radialGradient>
 <linearGradient id="bar" x2="0" y2="1"><stop offset="0" stop-color="#5c0a5c"/><stop offset=".07" stop-color="#8c0030"/><stop offset=".13" stop-color="#d00010"/><stop offset=".22" stop-color="#f22a00"/><stop offset=".33" stop-color="#ff8a00"/><stop offset=".42" stop-color="#eee020"/><stop offset=".52" stop-color="#7df060"/><stop offset=".59" stop-color="#28f0d8"/><stop offset=".66" stop-color="#38b8f4"/><stop offset=".72" stop-color="#8090fa"/><stop offset="1" stop-color="#a89cfb"/></linearGradient>
 <path id="arm" d="M497 310L650 372 980 485C1050 510 1090 580 1082 630 1076 680 1040 712 985 703L640 555 497 455 480 415 403 348z"/><path id="la" d="M163 435L330 525 480 625 600 700C650 735 690 770 712 804H428L345 730 187 615z"/><path id="tab" d="M163 433L285 391 422 462 420 478 340 512 332 532z"/><path id="base" d="M340 528L485 478 500 455 642 535 640 552 620 553 484 622z"/>
 <clipPath id="ca"><use href="#arm"/></clipPath><clipPath id="cl"><use href="#la"/></clipPath><clipPath id="ct"><use href="#tab"/></clipPath><clipPath id="cb"><use href="#base"/></clipPath></defs>
 <g transform="translate(325 530) scale(.33333)">
 <use href="#arm" fill="#ddd6f3"/><g clip-path="url(#ca)"><ellipse cx="640" cy="430" rx="150" ry="80" fill="url(#pu)"/><ellipse cx="560" cy="340" rx="130" ry="45" fill="url(#pu)"/><ellipse cx="520" cy="460" rx="70" ry="60" fill="url(#pu)"/><ellipse cx="700" cy="380" rx="150" ry="45" transform="rotate(18 700 380)" fill="url(#pu)" opacity=".7"/><ellipse cx="660" cy="550" rx="100" ry="50" fill="url(#pu)"/><ellipse cx="925" cy="530" rx="50" ry="70" fill="url(#pu)" opacity=".35"/><ellipse cx="635" cy="395" rx="38" ry="30" fill="url(#cy)"/><ellipse cx="455" cy="370" rx="80" ry="35" fill="url(#wh)"/>
 ${hot(568, 382, 20, 13, 15)}<ellipse cx="480" cy="338" rx="36" ry="20" fill="url(#cy)" opacity=".7"/></g>
 <use href="#base" fill="#c9c1f4"/><g clip-path="url(#cb)"><ellipse cx="500" cy="500" rx="140" ry="60" fill="url(#pu)" opacity=".5"/><ellipse cx="635" cy="540" rx="36" ry="26" fill="url(#cy)"/><path d="M484 618L630 550" stroke="#d7cff2" stroke-width="14"/></g>
 <path fill="#f7faff" d="M403 352L525 412V455L497 462 487 410zM340 525L420 482 498 455 485 478z"/>
 <path fill="#d9d2f2" d="M403 348L525 412 555 412 612 385V398L550 428 527 428 403 366z"/>
 <ellipse cx="977" cy="593" rx="40" ry="52" transform="rotate(-22 977 593)" fill="#f2f7ff"/>
 <use href="#la" fill="#ddd8f1"/><g clip-path="url(#cl)"><ellipse cx="230" cy="580" rx="130" ry="110" fill="url(#pu)"/><ellipse cx="240" cy="600" rx="90" ry="70" fill="url(#pu)"/><ellipse cx="310" cy="530" rx="80" ry="70" fill="url(#pu)"/><ellipse cx="320" cy="680" rx="60" ry="80" fill="url(#pu)" opacity=".8"/><ellipse cx="165" cy="450" rx="50" ry="60" fill="url(#cy)" opacity=".5"/><ellipse cx="305" cy="540" rx="50" ry="36" fill="url(#cy)"/><ellipse cx="235" cy="515" rx="45" ry="18" transform="rotate(35 235 515)" fill="url(#wh)" opacity=".8"/><ellipse cx="345" cy="620" rx="36" ry="60" fill="url(#wh)" opacity=".7"/></g>
 <use href="#tab" fill="#ddd8f1"/><g clip-path="url(#ct)"><ellipse cx="250" cy="470" rx="110" ry="55" transform="rotate(25 250 470)" fill="url(#pu)"/><ellipse cx="235" cy="425" rx="50" ry="28" fill="url(#cy)"/><ellipse cx="330" cy="508" rx="70" ry="34" fill="url(#cy)"/>${hot(338, 477, 24, 15)}${hot(246, 424, 9, 8)}</g>
 <path fill="#f7f9ff" d="M332 508L422 470V484L345 520z"/>
 <g fill="none" stroke="#111" stroke-width="2.500"><path d="M163 435L170 425 285 391 420 460Q424 466 418 472L335 506Q326 514 332 526zM163 435L187 615 345 730M335 520L422 480V466M163 435L480 612 660 718Q715 750 742 804M335 532L480 627 652 732Q700 765 718 804M652 732L665 716"/><path d="M345 524L485 474Q497 470 497 455V412M487 408V455L480 470M497 455L640 527M485 475L560 518M480 612L484 625 625 555Q640 552 650 560L975 718Q1010 728 1035 715 1068 695 1072 662M650 570L960 728Q1010 742 1040 720"/><path d="M403 348Q398 344 410 340L497 310 650 375M403 348L522 410Q535 418 552 411L610 385Q625 378 648 386L910 502M403 348V365L525 425Q540 434 555 425L612 398V385M552 411V426M648 386V416L612 398"/><ellipse cx="467" cy="343" rx="14" ry="7"/><ellipse cx="555" cy="383" rx="14" ry="7"/><ellipse cx="260" cy="423" rx="15" ry="8"/><ellipse cx="346" cy="471" rx="15" ry="8"/><path d="M925 587Q945 567 975 574 1010 590 1020 622M935 580Q995 570 1012 638M487 612L512 598"/></g></g>
 <rect x="711" y="662" width="16" height="180" fill="url(#bar)" stroke="#333"/>
 <g stroke="#222">${[1, 2, 3, 4, 5, 6, 7, 8].map(i => `<path d="M711 ${662 + Math.round(i * 16.600)}.5h3M724 ${662 + Math.round(i * 16.600)}.5h3"/>`).join('')}</g>
 ${[100, 90, 80, 70, 60, 50, 40, 30, 20].map((v, i) => `<text x="735" y="${667 + Math.round(i * 16.600)}">${v}</text>`).join('')}
 <text x="557" y="621" text-anchor="middle">Volume: von Mises stress (MPa)</text><svg x="758" y="600" width="20" height="20" viewBox="0 0 16 16">${ICONS.logo}</svg></svg>`; });

define('sobol-chart', `:host{display:block;background:#fff} svg{display:block;width:100%;font:12px "DejaVu Sans",sans-serif;fill:#111}`, () => {
  const X = i => 900.500 + Math.round(i * 92.150), Yv = v => Math.round(565 - v * 602) + .5;
  const C = ['#1038f0', '#28b83f', '#d00404', '#04d4d8', '#b800b8', '#ffc40c', '#000', '#1c3cd8'];
  const V = [.47106, .23592, .098, .088, .055, .023, .018, .001], N = ['ls', 'wp', 'wf', 'ts', 'r1', 'hm', 'lp', 'fr1'], L = ['#1038d0', '#2fae45', '#d01010', '#10c8cc', '#b010b0', '#f0b818', '#000', '#1f44b0'], NY = [308, 328, 354, 377, 400, 423, 443, 469];
  let g = '', t = '', bars = '';
  for (let i = 0; i < 8; i++) { g += `M${X(i)} 272V576`; t += `M${X(i)} 272v4M${X(i)} 577v-4`; const y = Yv(V[i]) + .5; bars += `<path fill="${C[i]}" d="M${X(i) - 28.500} ${y}h28V567h-28zM${X(i) + 2.500} ${y}h27V567h-27z"/>`; }
  const tv = [0, .05, .1, .15, .2, .25, .3, .35, .4, .45];
  for (const v of tv) { g += `M861 ${Yv(v)}H1586`; t += `M861 ${Yv(v)}h4M1586 ${Yv(v)}h-4`; }
  return `<svg viewBox="790 226 802 391" role="img" aria-label="Sobol index bar chart"><path stroke="#e9e9e9" d="${g}"/>${bars}<path ${st('#777')} d="M861.500 271.500h724v305h-724z${t}"/>
 ${tv.map(v => `<text x="856" y="${Yv(v) + 4}" text-anchor="end">${v}</text>`).join('')}${C.map((c, i) => `<text x="${X(i)}" y="595" text-anchor="middle">${i + 1}</text>`).join('')}
 <text x="1221" y="252" text-anchor="middle">Sobol index: comp1.phi</text><text x="1223" y="610" text-anchor="middle">Input parameter</text><text transform="translate(803 425) rotate(-90)" text-anchor="middle">First-order and total Sobol indices</text>
 <path fill="#808080" d="M1501 289h68v192h-68z"/><path fill="#fff" stroke="#000" d="M1504.500 285.500h68v192h-68z"/>${N.map((n, i) => `<path stroke="${L[i]}" d="M1512 ${300 + i * 23}.5h26"/><text x="1544" y="${NY[i]}">${n}</text>`).join('')}
 <svg x="1567" y="231" width="20" height="20" viewBox="0 0 16 16">${ICONS.logo}</svg></svg>`; });

const ROWS = [['ts', '0.088417'], ['lp', '0.019238'], ['ls', '0.47106'], ['hm', '0.024383'], ['wp', '0.23592']];
define('result-table', `:host{display:block;margin:2px 4px 0;border:1px solid #b4b4b4;border-bottom:0} table{border-collapse:collapse;width:100%;table-layout:fixed;background:#fff;color:#000;line-height:16px} th,td{border:1px solid #a9a9a9;border-width:0 1px 1px 0;padding:0 1px;height:18px;text-align:left;font-weight:400;white-space:nowrap;overflow:hidden}
 thead th{background:#efefef;height:25px;border-bottom:0;text-align:center;padding:5px 0 0} tbody th{background:#efefef;box-shadow:inset -1px -1px #fff} tr>:last-child{border-right:0} .n{width:30px} .a{width:127px} .b{width:99px}`,
  `<table><thead><tr><th class="n"></th><th class="a">comp1.phi, First order</th><th class="b">comp1.phi, Total</th><th></th></tr></thead><tbody>${ROWS.map(([n, v]) => `<tr><th>${n}</th><td>${v}</td><td>${v}</td><td></td></tr>`).join('')}</tbody></table>`);

define('comsol-app', `:host{display:flex;flex-direction:column;height:100vh} main{flex:1;min-height:0;display:grid;grid-template-columns:321fr 451fr 802fr;gap:7px;padding:7px 4px 0} .col{display:grid;gap:7px;min-width:0;min-height:0} .mid{grid-template-rows:361fr 260fr} .rt{grid-template-rows:447fr 174fr} .bar{height:24px;flex:none;padding:0 0 2px 3px}
 title-bar,menu-tabs,ribbon-bar{flex:none} sobol-chart{flex:1}`,
  `<title-bar></title-bar><menu-tabs></menu-tabs><ribbon-bar></ribbon-bar>
 <main><dock-panel heading="Model Builder"><model-tree></model-tree></dock-panel>
 <div class="col mid"><dock-panel heading="Settings"><settings-form></settings-form></dock-panel><dock-panel heading="Stress" tone="live" closable><stress-view></stress-view></dock-panel></div>
 <div class="col rt"><dock-panel><tab-row tabs="Graphics,*Sobol Index!"></tab-row><tool-strip class="bar" items="zoom v | gv gh *legend *note | lock | palette v | camera v"></tool-strip><sobol-chart></sobol-chart></dock-panel>
 <dock-panel><tab-row tabs="Messages!,Progress,Log,*Sobol!"></tab-row><tool-strip class="bar" items="nlist | #8.85,e-12 *#AUTO #8.5,e-1 #850,e-3 #0.85 | *tbl polar | broom trash | ptable square contour scatter | cpt expt wins | form ptab v"></tool-strip><result-table></result-table></dock-panel></div></main>`);
</script>
</body>
</html>
